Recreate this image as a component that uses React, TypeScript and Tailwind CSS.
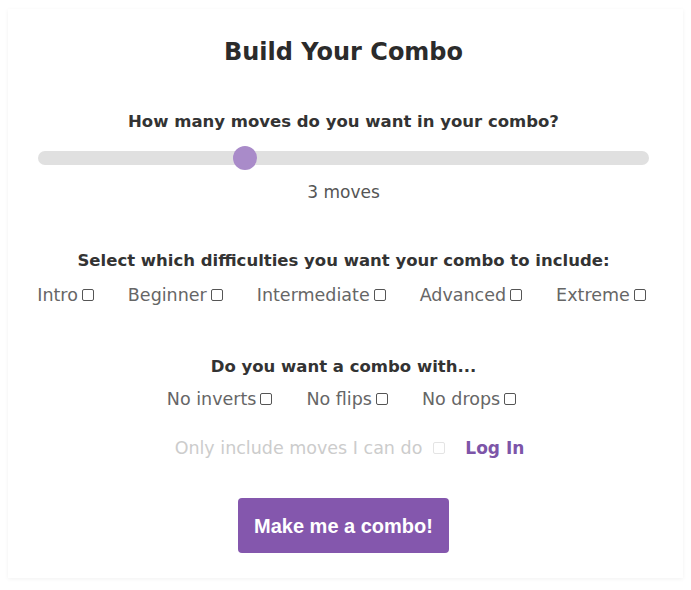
import React, { useState } from 'react';

const difficulties = ['Intro', 'Beginner', 'Intermediate', 'Advanced', 'Extreme'];
const filters = ['No inverts', 'No flips', 'No drops'];

const Check = ({ disabled }: { disabled?: boolean }) => (
  <input
    type="checkbox"
    disabled={disabled}
    className={`ml-[4px] w-[12px] h-[12px] appearance-none rounded-[2px] border bg-white align-middle ${
      disabled ? 'border-[#e4e4e4]' : 'border-[#555]'
    }`}
  />
);

export default function App() {
  const [moves] = useState(3);

  return (
    <div className="min-h-screen bg-white pt-[9px] px-[8px] font-['DejaVu_Sans',sans-serif] text-[#333]">
      <div className="flex flex-col items-center pr-[4px] pt-[27px] pb-[25px] shadow-[0_1px_4px_rgba(0,0,0,0.06)]">
        <h1 className="text-[24px] font-bold leading-[32px] text-[#2b2b2b]">Build Your Combo</h1>

        <h2 className="mt-[42px] text-[16.5px] font-bold leading-[24px]">How many moves do you want in your combo?</h2>

        {/* slider */}
        <div className="relative mt-[17px] w-[611px] h-[14px] rounded-full bg-[#e0e0e0]">
          <div className="absolute top-1/2 left-[195px] -translate-y-1/2 w-[24px] h-[24px] rounded-full bg-[#a98bc9]" />
        </div>
        <div className="mt-[15px] text-[17px] leading-[24px] text-[#555]">{moves} moves</div>

        <h2 className="mt-[45px] text-[16.5px] font-bold leading-[24px]">
          Select which difficulties you want your combo to include:
        </h2>
        <div className="mt-[10px] mr-[4px] flex gap-[34px] text-[17.5px] leading-[24px] text-[#666]">
          {difficulties.map((d) => (
            <label key={d} className="flex items-center">
              {d}
              <Check />
            </label>
          ))}
        </div>

        <h2 className="mt-[48px] text-[16.5px] font-bold leading-[24px]">Do you want a combo with...</h2>
        <div className="mt-[8px] mr-[4px] flex gap-[34px] text-[17.5px] leading-[24px] text-[#666]">
          {filters.map((f) => (
            <label key={f} className="flex items-center">
              {f}
              <Check />
            </label>
          ))}
        </div>

        <div className="mt-[25px] ml-[12px] flex items-center text-[17.5px] leading-[24px]">
          <span className="text-[#cccccc]">Only include moves I can do</span>
          <span className="ml-[7px] flex"><Check disabled /></span>
          <a className="ml-[20px] text-[17px] font-bold text-[#7d55a8]">Log In</a>
        </div>

        <button className="mt-[38px] w-[211px] h-[55px] rounded-[4px] bg-[#8457ad] text-white text-[20px] font-bold font-['Liberation_Sans',sans-serif]">
          Make me a combo!
        </button>
      </div>
    </div>
  );
}
